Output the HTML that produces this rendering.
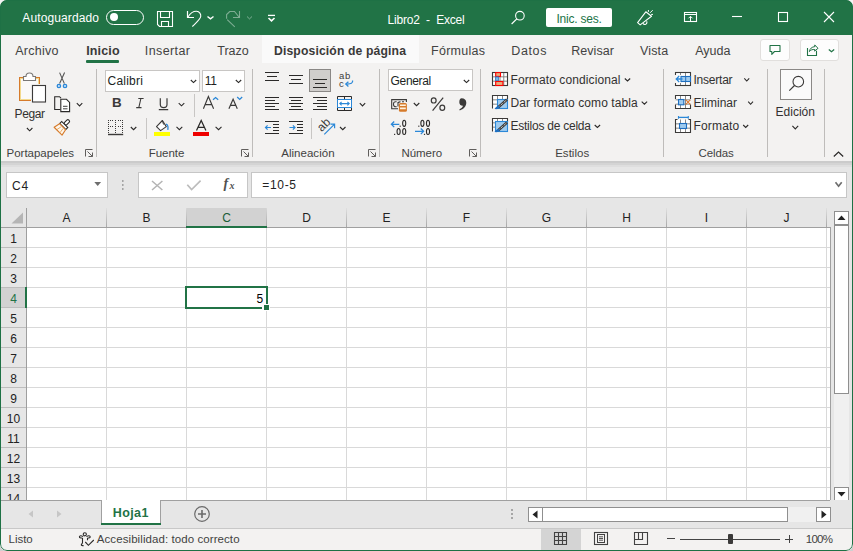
<!DOCTYPE html>
<html><head><meta charset="utf-8"><style>
html,body{margin:0;padding:0;}
body{width:853px;height:551px;overflow:hidden;position:relative;background:linear-gradient(#f4f4f4,#f4f4f4 50%,#cfcfcf);font-family:'Liberation Sans',sans-serif;}
#win{position:absolute;left:0;top:0;width:853px;height:551px;border-radius:7px;overflow:hidden;background:#f3f2f1;}
svg{overflow:visible}
</style></head><body><div id="win">
<div style="position:absolute;left:0px;top:0px;width:853px;height:35px;background:#217346"></div><div style="position:absolute;left:22.30px;top:9.64px;font-family:'Liberation Sans', sans-serif;font-size:12px;line-height:16px;font-weight:400;color:#ffffff;letter-spacing:0.118px;white-space:pre;">Autoguardado</div><div style="position:absolute;left:387.50px;top:11.64px;font-family:'Liberation Sans', sans-serif;font-size:12px;line-height:16px;font-weight:400;color:#ffffff;letter-spacing:-0.187px;white-space:pre;">Libro2  -  Excel</div><div style="position:absolute;left:106px;top:9.5px;width:38px;height:15px;box-sizing:border-box;border:1.2px solid #fff;border-radius:8px"></div><div style="position:absolute;left:109.7px;top:12.9px;width:8px;height:8px;background:#fff;border-radius:50%"></div><div style="position:absolute;left:546px;top:8px;width:66px;height:18.5px;background:#fff;border-radius:2px"></div><div style="position:absolute;left:556.40px;top:10.54px;font-family:'Liberation Sans', sans-serif;font-size:12px;line-height:16px;font-weight:400;color:#217346;letter-spacing:-0.222px;white-space:pre;">Inic. ses.</div><div style="position:absolute;left:262px;top:35px;width:156.5px;height:27.6px;background:#fafafa"></div><div style="position:absolute;left:15.20px;top:42.87px;font-family:'Liberation Sans', sans-serif;font-size:12.5px;line-height:16px;font-weight:400;color:#424242;letter-spacing:0.250px;white-space:pre;">Archivo</div><div style="position:absolute;left:86.20px;top:42.87px;font-family:'Liberation Sans', sans-serif;font-size:12.5px;line-height:16px;font-weight:700;color:#3a3938;letter-spacing:0.140px;white-space:pre;">Inicio</div><div style="position:absolute;left:144.80px;top:42.87px;font-family:'Liberation Sans', sans-serif;font-size:12.5px;line-height:16px;font-weight:400;color:#424242;letter-spacing:0.386px;white-space:pre;">Insertar</div><div style="position:absolute;left:217.30px;top:42.87px;font-family:'Liberation Sans', sans-serif;font-size:12.5px;line-height:16px;font-weight:400;color:#424242;letter-spacing:-0.025px;white-space:pre;">Trazo</div><div style="position:absolute;left:274.00px;top:42.97px;font-family:'Liberation Sans', sans-serif;font-size:12.2px;line-height:16px;font-weight:700;color:#3a3938;letter-spacing:0.130px;white-space:pre;">Disposición de página</div><div style="position:absolute;left:431.10px;top:42.87px;font-family:'Liberation Sans', sans-serif;font-size:12.5px;line-height:16px;font-weight:400;color:#424242;letter-spacing:0.243px;white-space:pre;">Fórmulas</div><div style="position:absolute;left:511.30px;top:42.87px;font-family:'Liberation Sans', sans-serif;font-size:12.5px;line-height:16px;font-weight:400;color:#424242;letter-spacing:0.625px;white-space:pre;">Datos</div><div style="position:absolute;left:571.20px;top:42.87px;font-family:'Liberation Sans', sans-serif;font-size:12.5px;line-height:16px;font-weight:400;color:#424242;letter-spacing:0.067px;white-space:pre;">Revisar</div><div style="position:absolute;left:640.00px;top:42.87px;font-family:'Liberation Sans', sans-serif;font-size:12.5px;line-height:16px;font-weight:400;color:#424242;letter-spacing:0.150px;white-space:pre;">Vista</div><div style="position:absolute;left:695.20px;top:42.87px;font-family:'Liberation Sans', sans-serif;font-size:12.5px;line-height:16px;font-weight:400;color:#424242;letter-spacing:0.025px;white-space:pre;">Ayuda</div><div style="position:absolute;left:86px;top:59.6px;width:33px;height:3px;background:#217346;border-radius:1px"></div><div style="position:absolute;left:760px;top:38.7px;width:30.4px;height:22.1px;box-sizing:border-box;background:#fdfdfd;border:1px solid #e1dfdd;border-radius:3px"></div><div style="position:absolute;left:799.6px;top:38.7px;width:39.5px;height:22.1px;box-sizing:border-box;background:#fdfdfd;border:1px solid #e1dfdd;border-radius:3px"></div><div style="position:absolute;left:96px;top:69px;width:1px;height:88px;background:#bebcba"></div><div style="position:absolute;left:252px;top:69px;width:1px;height:88px;background:#bebcba"></div><div style="position:absolute;left:379px;top:69px;width:1px;height:88px;background:#bebcba"></div><div style="position:absolute;left:480px;top:69px;width:1px;height:88px;background:#bebcba"></div><div style="position:absolute;left:663px;top:69px;width:1px;height:88px;background:#bebcba"></div><div style="position:absolute;left:767px;top:69px;width:1px;height:88px;background:#bebcba"></div><div style="position:absolute;left:824px;top:69px;width:1px;height:88px;background:#bebcba"></div><div style="position:absolute;left:14.60px;top:105.54px;font-family:'Liberation Sans', sans-serif;font-size:12px;line-height:16px;font-weight:400;color:#323130;letter-spacing:-0.425px;white-space:pre;">Pegar</div><div style="position:absolute;left:6.60px;top:144.72px;font-family:'Liberation Sans', sans-serif;font-size:11.5px;line-height:16px;font-weight:400;color:#424242;letter-spacing:-0.027px;white-space:pre;">Portapapeles</div><div style="position:absolute;left:148.80px;top:144.82px;font-family:'Liberation Sans', sans-serif;font-size:11.5px;line-height:16px;font-weight:400;color:#424242;letter-spacing:-0.060px;white-space:pre;">Fuente</div><div style="position:absolute;left:281.20px;top:145.02px;font-family:'Liberation Sans', sans-serif;font-size:11.5px;line-height:16px;font-weight:400;color:#424242;letter-spacing:0.033px;white-space:pre;">Alineación</div><div style="position:absolute;left:401.40px;top:144.82px;font-family:'Liberation Sans', sans-serif;font-size:11.5px;line-height:16px;font-weight:400;color:#424242;letter-spacing:-0.040px;white-space:pre;">Número</div><div style="position:absolute;left:555.20px;top:144.82px;font-family:'Liberation Sans', sans-serif;font-size:11.5px;line-height:16px;font-weight:400;color:#424242;letter-spacing:0.017px;white-space:pre;">Estilos</div><div style="position:absolute;left:698.60px;top:144.82px;font-family:'Liberation Sans', sans-serif;font-size:11.5px;line-height:16px;font-weight:400;color:#424242;letter-spacing:-0.140px;white-space:pre;">Celdas</div><div style="position:absolute;left:510.50px;top:71.64px;font-family:'Liberation Sans', sans-serif;font-size:12px;line-height:16px;font-weight:400;color:#323130;letter-spacing:0.106px;white-space:pre;">Formato condicional</div><div style="position:absolute;left:510.50px;top:94.84px;font-family:'Liberation Sans', sans-serif;font-size:12px;line-height:16px;font-weight:400;color:#323130;letter-spacing:0.086px;white-space:pre;">Dar formato como tabla</div><div style="position:absolute;left:510.50px;top:118.24px;font-family:'Liberation Sans', sans-serif;font-size:12px;line-height:16px;font-weight:400;color:#323130;letter-spacing:-0.240px;white-space:pre;">Estilos de celda</div><div style="position:absolute;left:693.50px;top:71.64px;font-family:'Liberation Sans', sans-serif;font-size:12px;line-height:16px;font-weight:400;color:#323130;letter-spacing:-0.229px;white-space:pre;">Insertar</div><div style="position:absolute;left:693.50px;top:94.84px;font-family:'Liberation Sans', sans-serif;font-size:12px;line-height:16px;font-weight:400;color:#323130;letter-spacing:0.029px;white-space:pre;">Eliminar</div><div style="position:absolute;left:693.50px;top:118.24px;font-family:'Liberation Sans', sans-serif;font-size:12px;line-height:16px;font-weight:400;color:#323130;letter-spacing:0.167px;white-space:pre;">Formato</div><div style="position:absolute;left:775.60px;top:103.54px;font-family:'Liberation Sans', sans-serif;font-size:12px;line-height:16px;font-weight:400;color:#323130;letter-spacing:0.000px;white-space:pre;">Edición</div><div style="position:absolute;left:105px;top:69.5px;width:94.5px;height:22px;box-sizing:border-box;background:#fff;border:1px solid #c8c6c4"></div><div style="position:absolute;left:202px;top:69.5px;width:42.7px;height:22px;box-sizing:border-box;background:#fff;border:1px solid #c8c6c4"></div><div style="position:absolute;left:388.4px;top:69.3px;width:84.4px;height:22.2px;box-sizing:border-box;background:#fff;border:1px solid #c8c6c4"></div><div style="position:absolute;left:107.50px;top:72.74px;font-family:'Liberation Sans', sans-serif;font-size:12px;line-height:16px;font-weight:400;color:#201f1e;letter-spacing:0.233px;white-space:pre;">Calibri</div><div style="position:absolute;left:204.70px;top:72.74px;font-family:'Liberation Sans', sans-serif;font-size:12px;line-height:16px;font-weight:400;color:#201f1e;letter-spacing:-0.100px;white-space:pre;">11</div><div style="position:absolute;left:390.60px;top:72.64px;font-family:'Liberation Sans', sans-serif;font-size:12px;line-height:16px;font-weight:400;color:#201f1e;letter-spacing:-0.333px;white-space:pre;">General</div><div style="position:absolute;left:309.4px;top:69.4px;width:21.3px;height:22.5px;box-sizing:border-box;background:#d0cecc;border:1px solid #8a8886"></div><div style="position:absolute;left:780px;top:69.1px;width:32px;height:30.7px;box-sizing:border-box;background:#fafafa;border:1px solid #8a8886"></div><div style="position:absolute;left:0px;top:161px;width:853px;height:47px;background:#e6e6e6"></div><div style="position:absolute;left:0px;top:161px;width:853px;height:2px;background:#cbcbcb"></div><div style="position:absolute;left:0px;top:163px;width:853px;height:2px;background:#d4d4d4"></div><div style="position:absolute;left:0px;top:165px;width:853px;height:2px;background:#dedede"></div><div style="position:absolute;left:6px;top:172px;width:102px;height:26px;box-sizing:border-box;background:#fff;border:1px solid #c6c6c6"></div><div style="position:absolute;left:138px;top:172px;width:110px;height:26px;box-sizing:border-box;background:#fff;border:1px solid #c6c6c6"></div><div style="position:absolute;left:251px;top:172px;width:596px;height:26px;box-sizing:border-box;background:#fff;border:1px solid #c6c6c6"></div><div style="position:absolute;left:12.10px;top:177.64px;font-family:'Liberation Sans', sans-serif;font-size:12px;line-height:16px;font-weight:400;color:#222222;letter-spacing:0.800px;white-space:pre;">C4</div><div style="position:absolute;left:262.20px;top:177.44px;font-family:'Liberation Sans', sans-serif;font-size:12px;line-height:16px;font-weight:400;color:#222222;letter-spacing:0.700px;white-space:pre;">=10-5</div><div style="position:absolute;left:0px;top:208px;width:853px;height:293px;background:#e6e6e6"></div><div style="position:absolute;left:27px;top:228px;width:803px;height:272px;background:#fff"></div><div style="position:absolute;left:106px;top:228px;width:1px;height:272px;background:#d9d9d9"></div><div style="position:absolute;left:186px;top:228px;width:1px;height:272px;background:#d9d9d9"></div><div style="position:absolute;left:266px;top:228px;width:1px;height:272px;background:#d9d9d9"></div><div style="position:absolute;left:346px;top:228px;width:1px;height:272px;background:#d9d9d9"></div><div style="position:absolute;left:426px;top:228px;width:1px;height:272px;background:#d9d9d9"></div><div style="position:absolute;left:506px;top:228px;width:1px;height:272px;background:#d9d9d9"></div><div style="position:absolute;left:586px;top:228px;width:1px;height:272px;background:#d9d9d9"></div><div style="position:absolute;left:666px;top:228px;width:1px;height:272px;background:#d9d9d9"></div><div style="position:absolute;left:746px;top:228px;width:1px;height:272px;background:#d9d9d9"></div><div style="position:absolute;left:826px;top:228px;width:1px;height:272px;background:#d9d9d9"></div><div style="position:absolute;left:27px;top:247px;width:803px;height:1px;background:#d9d9d9"></div><div style="position:absolute;left:27px;top:267px;width:803px;height:1px;background:#d9d9d9"></div><div style="position:absolute;left:27px;top:287px;width:803px;height:1px;background:#d9d9d9"></div><div style="position:absolute;left:27px;top:307px;width:803px;height:1px;background:#d9d9d9"></div><div style="position:absolute;left:27px;top:327px;width:803px;height:1px;background:#d9d9d9"></div><div style="position:absolute;left:27px;top:347px;width:803px;height:1px;background:#d9d9d9"></div><div style="position:absolute;left:27px;top:367px;width:803px;height:1px;background:#d9d9d9"></div><div style="position:absolute;left:27px;top:387px;width:803px;height:1px;background:#d9d9d9"></div><div style="position:absolute;left:27px;top:407px;width:803px;height:1px;background:#d9d9d9"></div><div style="position:absolute;left:27px;top:427px;width:803px;height:1px;background:#d9d9d9"></div><div style="position:absolute;left:27px;top:447px;width:803px;height:1px;background:#d9d9d9"></div><div style="position:absolute;left:27px;top:467px;width:803px;height:1px;background:#d9d9d9"></div><div style="position:absolute;left:27px;top:487px;width:803px;height:1px;background:#d9d9d9"></div><div style="position:absolute;left:27px;top:507px;width:803px;height:1px;background:#d9d9d9"></div><div style="position:absolute;left:26px;top:208px;width:1px;height:293px;background:#9e9e9e"></div><div style="position:absolute;left:106px;top:208px;width:1px;height:19px;background:linear-gradient(#e0e0e0,#a8a8a8)"></div><div style="position:absolute;left:186px;top:208px;width:1px;height:19px;background:linear-gradient(#e0e0e0,#a8a8a8)"></div><div style="position:absolute;left:266px;top:208px;width:1px;height:19px;background:linear-gradient(#e0e0e0,#a8a8a8)"></div><div style="position:absolute;left:346px;top:208px;width:1px;height:19px;background:linear-gradient(#e0e0e0,#a8a8a8)"></div><div style="position:absolute;left:426px;top:208px;width:1px;height:19px;background:linear-gradient(#e0e0e0,#a8a8a8)"></div><div style="position:absolute;left:506px;top:208px;width:1px;height:19px;background:linear-gradient(#e0e0e0,#a8a8a8)"></div><div style="position:absolute;left:586px;top:208px;width:1px;height:19px;background:linear-gradient(#e0e0e0,#a8a8a8)"></div><div style="position:absolute;left:666px;top:208px;width:1px;height:19px;background:linear-gradient(#e0e0e0,#a8a8a8)"></div><div style="position:absolute;left:746px;top:208px;width:1px;height:19px;background:linear-gradient(#e0e0e0,#a8a8a8)"></div><div style="position:absolute;left:826px;top:208px;width:1px;height:19px;background:linear-gradient(#e0e0e0,#a8a8a8)"></div><div style="position:absolute;left:1px;top:227px;width:829px;height:1px;background:#a0a0a0"></div><div style="position:absolute;left:1px;top:247px;width:25px;height:1px;background:#bdbdbd"></div><div style="position:absolute;left:1px;top:267px;width:25px;height:1px;background:#bdbdbd"></div><div style="position:absolute;left:1px;top:287px;width:25px;height:1px;background:#bdbdbd"></div><div style="position:absolute;left:1px;top:307px;width:25px;height:1px;background:#bdbdbd"></div><div style="position:absolute;left:1px;top:327px;width:25px;height:1px;background:#bdbdbd"></div><div style="position:absolute;left:1px;top:347px;width:25px;height:1px;background:#bdbdbd"></div><div style="position:absolute;left:1px;top:367px;width:25px;height:1px;background:#bdbdbd"></div><div style="position:absolute;left:1px;top:387px;width:25px;height:1px;background:#bdbdbd"></div><div style="position:absolute;left:1px;top:407px;width:25px;height:1px;background:#bdbdbd"></div><div style="position:absolute;left:1px;top:427px;width:25px;height:1px;background:#bdbdbd"></div><div style="position:absolute;left:1px;top:447px;width:25px;height:1px;background:#bdbdbd"></div><div style="position:absolute;left:1px;top:467px;width:25px;height:1px;background:#bdbdbd"></div><div style="position:absolute;left:1px;top:487px;width:25px;height:1px;background:#bdbdbd"></div><div style="position:absolute;left:1px;top:507px;width:25px;height:1px;background:#bdbdbd"></div><svg style="position:absolute;left:11px;top:212px;" width="13" height="12" viewBox="0 0 13 12"><path d="M12 0.5 L12 11.5 L0.5 11.5 Z" fill="#b5b5b5"/></svg><div style="position:absolute;left:186px;top:208px;width:81px;height:18px;background:#d2d2d2"></div><div style="position:absolute;left:186px;top:208px;width:1px;height:19px;background:linear-gradient(#d8d8d8,#a8a8a8)"></div><div style="position:absolute;left:266px;top:208px;width:1px;height:19px;background:linear-gradient(#d8d8d8,#a8a8a8)"></div><div style="position:absolute;left:186px;top:226px;width:81px;height:2px;background:#217346"></div><div style="position:absolute;left:1px;top:288px;width:24px;height:19px;background:#d2d2d2"></div><div style="position:absolute;left:25px;top:287px;width:2px;height:21px;background:#217346"></div><div style="position:absolute;left:27px;top:209.84px;width:79px;text-align:center;font-size:12px;line-height:16px;color:#222">A</div><div style="position:absolute;left:107px;top:209.84px;width:79px;text-align:center;font-size:12px;line-height:16px;color:#222">B</div><div style="position:absolute;left:187px;top:209.84px;width:79px;text-align:center;font-size:12px;line-height:16px;color:#185c37">C</div><div style="position:absolute;left:267px;top:209.84px;width:79px;text-align:center;font-size:12px;line-height:16px;color:#222">D</div><div style="position:absolute;left:347px;top:209.84px;width:79px;text-align:center;font-size:12px;line-height:16px;color:#222">E</div><div style="position:absolute;left:427px;top:209.84px;width:79px;text-align:center;font-size:12px;line-height:16px;color:#222">F</div><div style="position:absolute;left:507px;top:209.84px;width:79px;text-align:center;font-size:12px;line-height:16px;color:#222">G</div><div style="position:absolute;left:587px;top:209.84px;width:79px;text-align:center;font-size:12px;line-height:16px;color:#222">H</div><div style="position:absolute;left:667px;top:209.84px;width:79px;text-align:center;font-size:12px;line-height:16px;color:#222">I</div><div style="position:absolute;left:747px;top:209.84px;width:79px;text-align:center;font-size:12px;line-height:16px;color:#222">J</div><div style="position:absolute;left:1px;top:230.84px;width:25px;text-align:center;font-size:12px;line-height:16px;color:#222">1</div><div style="position:absolute;left:1px;top:250.84px;width:25px;text-align:center;font-size:12px;line-height:16px;color:#222">2</div><div style="position:absolute;left:1px;top:270.84px;width:25px;text-align:center;font-size:12px;line-height:16px;color:#222">3</div><div style="position:absolute;left:1px;top:290.84px;width:25px;text-align:center;font-size:12px;line-height:16px;color:#217346">4</div><div style="position:absolute;left:1px;top:310.84px;width:25px;text-align:center;font-size:12px;line-height:16px;color:#222">5</div><div style="position:absolute;left:1px;top:330.84px;width:25px;text-align:center;font-size:12px;line-height:16px;color:#222">6</div><div style="position:absolute;left:1px;top:350.84px;width:25px;text-align:center;font-size:12px;line-height:16px;color:#222">7</div><div style="position:absolute;left:1px;top:370.84px;width:25px;text-align:center;font-size:12px;line-height:16px;color:#222">8</div><div style="position:absolute;left:1px;top:390.84px;width:25px;text-align:center;font-size:12px;line-height:16px;color:#222">9</div><div style="position:absolute;left:1px;top:410.84px;width:25px;text-align:center;font-size:12px;line-height:16px;color:#222">10</div><div style="position:absolute;left:1px;top:430.84px;width:25px;text-align:center;font-size:12px;line-height:16px;color:#222">11</div><div style="position:absolute;left:1px;top:450.84px;width:25px;text-align:center;font-size:12px;line-height:16px;color:#222">12</div><div style="position:absolute;left:1px;top:470.84px;width:25px;text-align:center;font-size:12px;line-height:16px;color:#222">13</div><div style="position:absolute;left:1px;top:490.84px;width:25px;text-align:center;font-size:12px;line-height:16px;color:#222">14</div><div style="position:absolute;left:830px;top:227px;width:1px;height:274px;background:#a0a0a0"></div><div style="position:absolute;left:185px;top:286px;width:83px;height:23px;box-sizing:border-box;border:2px solid #217346"></div><div style="position:absolute;left:262px;top:304px;width:8px;height:7px;background:#fff"></div><div style="position:absolute;left:264px;top:305px;width:5px;height:5px;background:#217346"></div><div style="position:absolute;left:256.50px;top:290.74px;font-family:'Liberation Sans', sans-serif;font-size:12px;line-height:16px;font-weight:400;color:#000000;letter-spacing:0.000px;white-space:pre;">5</div><div style="position:absolute;left:831px;top:208px;width:21px;height:293px;background:#e6e6e6"></div><div style="position:absolute;left:834px;top:225px;width:15px;height:275px;background:#f0f0f0"></div><div style="position:absolute;left:834px;top:210.5px;width:15px;height:14px;box-sizing:border-box;background:#fff;border:1px solid #8f8f8f"></div><svg style="position:absolute;left:834px;top:210.5px;" width="15" height="14" viewBox="0 0 15 14"><path d="M3.5 9 L11.5 9 L7.5 4.5 Z" fill="#222"/></svg><div style="position:absolute;left:834px;top:225px;width:15px;height:169px;box-sizing:border-box;background:#fff;border:1px solid #8f8f8f"></div><div style="position:absolute;left:834px;top:486.5px;width:15px;height:14px;box-sizing:border-box;background:#fff;border:1px solid #8f8f8f"></div><svg style="position:absolute;left:834px;top:486.5px;" width="15" height="14" viewBox="0 0 15 14"><path d="M3.5 5 L11.5 5 L7.5 9.5 Z" fill="#222"/></svg><div style="position:absolute;left:1px;top:500px;width:851px;height:28px;background:#e6e6e6"></div><div style="position:absolute;left:1px;top:500px;width:829px;height:1px;background:#a0a0a0"></div><div style="position:absolute;left:101px;top:500px;width:60px;height:25px;box-sizing:border-box;background:#fff;border-left:1px solid #a0a0a0;border-right:1px solid #a0a0a0"></div><div style="position:absolute;left:101px;top:523px;width:60px;height:2px;background:#217346"></div><div style="position:absolute;left:112.80px;top:505.17px;font-family:'Liberation Sans', sans-serif;font-size:12.5px;line-height:16px;font-weight:700;color:#217346;letter-spacing:0.375px;white-space:pre;">Hoja1</div><svg style="position:absolute;left:27px;top:510px;" width="7" height="8" viewBox="0 0 7 8"><path d="M6 0.5 L6 7.5 L1.5 4 Z" fill="#c6c6c6"/></svg><svg style="position:absolute;left:56px;top:510px;" width="7" height="8" viewBox="0 0 7 8"><path d="M1 0.5 L1 7.5 L5.5 4 Z" fill="#c6c6c6"/></svg><svg style="position:absolute;left:193px;top:505px;" width="18" height="18" viewBox="0 0 18 18"><circle cx="9" cy="9" r="7.3" fill="none" stroke="#6a6a6a" stroke-width="1.2"/><path d="M9 5 V13 M5 9 H13" stroke="#6a6a6a" stroke-width="1.6"/></svg><div style="position:absolute;left:511px;top:509px;width:2px;height:2px;background:#a6a6a6"></div><div style="position:absolute;left:511px;top:513px;width:2px;height:2px;background:#a6a6a6"></div><div style="position:absolute;left:511px;top:517px;width:2px;height:2px;background:#a6a6a6"></div><div style="position:absolute;left:528px;top:507px;width:303px;height:15px;background:#f0f0f0"></div><div style="position:absolute;left:528px;top:507px;width:15px;height:15px;box-sizing:border-box;background:#fff;border:1px solid #8f8f8f"></div><svg style="position:absolute;left:528px;top:507px;" width="15" height="15" viewBox="0 0 15 15"><path d="M9.5 3.5 L9.5 11.5 L4.5 7.5 Z" fill="#222"/></svg><div style="position:absolute;left:542px;top:507px;width:246px;height:15px;box-sizing:border-box;background:#fff;border:1px solid #8f8f8f"></div><div style="position:absolute;left:816px;top:507px;width:15px;height:15px;box-sizing:border-box;background:#fff;border:1px solid #8f8f8f"></div><svg style="position:absolute;left:816px;top:507px;" width="15" height="15" viewBox="0 0 15 15"><path d="M5.5 3.5 L5.5 11.5 L10.5 7.5 Z" fill="#222"/></svg><div style="position:absolute;left:1px;top:528px;width:851px;height:1px;background:#c8c8c8"></div><div style="position:absolute;left:1px;top:529px;width:851px;height:21px;background:#f3f2f1"></div><div style="position:absolute;left:541px;top:529px;width:40px;height:21px;background:#d4d4d4"></div><div style="position:absolute;left:8.60px;top:530.62px;font-family:'Liberation Sans', sans-serif;font-size:11.5px;line-height:16px;font-weight:400;color:#424242;letter-spacing:-0.050px;white-space:pre;">Listo</div><div style="position:absolute;left:96.80px;top:531.42px;font-family:'Liberation Sans', sans-serif;font-size:11.5px;line-height:16px;font-weight:400;color:#424242;letter-spacing:0.078px;white-space:pre;">Accesibilidad: todo correcto</div><div style="position:absolute;left:805.80px;top:531.12px;font-family:'Liberation Sans', sans-serif;font-size:11.5px;line-height:16px;font-weight:400;color:#424242;letter-spacing:-0.733px;white-space:pre;">100%</div><div style="position:absolute;left:667px;top:538px;width:8px;height:1px;background:#444"></div><div style="position:absolute;left:680px;top:539px;width:100px;height:1.2px;background:#444"></div><div style="position:absolute;left:728px;top:534.3px;width:5px;height:10.2px;background:#3b3a39;border-radius:1px"></div><div style="position:absolute;left:785px;top:538.5px;width:8px;height:1px;background:#444"></div><div style="position:absolute;left:788.5px;top:535px;width:1px;height:8px;background:#444"></div><div style="position:absolute;left:194px;top:94px;width:1px;height:23px;background:#c8c6c4"></div><div style="position:absolute;left:146px;top:118px;width:1px;height:21px;background:#c8c6c4"></div><div style="position:absolute;left:154px;top:132px;width:16px;height:4px;background:#ffff00"></div><div style="position:absolute;left:193px;top:132px;width:16px;height:4px;background:#ee0000"></div><div style="position:absolute;left:338.9px;top:68.4px;font-size:9.5px;line-height:16px;color:#3b3a39;letter-spacing:0.9px">ab</div><div style="position:absolute;left:338.9px;top:75.6px;font-size:9.5px;line-height:16px;color:#3b3a39">c</div><div style="position:absolute;left:311px;top:118px;width:1px;height:21px;background:#c8c6c4"></div><div style="position:absolute;left:223.5px;top:175.6px;font-family:'Liberation Serif',serif;font-style:italic;font-weight:700;font-size:14px;line-height:16px;color:#505050">f</div><div style="position:absolute;left:229.5px;top:178.2px;font-family:'Liberation Serif',serif;font-style:italic;font-weight:700;font-size:10px;line-height:16px;color:#505050">x</div><svg style="position:absolute;left:0;top:0" width="853" height="551" viewBox="0 0 853 551" fill="none"><path d="M157.5 11.5 H172.5 V26.5 H159.5 L157.5 24.5 Z M160.5 11.5 V17.5 H169.5 V11.5 M161.5 26.5 V21.5 H168.5 V26.5" stroke="#ffffff" stroke-width="1.1"/><path d="M187.5 11 V17.5 H194" stroke="#ffffff" stroke-width="1.2"/><path d="M188 17 C190.5 13, 193.5 11.2, 196.5 11.3 C199.5 11.5, 201.2 14, 200.7 16.7 C200.2 19.5, 196 22.8, 192.3 26.5" stroke="#ffffff" stroke-width="1.1"/><path d="M207.5 16.5 L210.5 18.9 L213.5 16.5" stroke="#ffffff" stroke-width="1.4" fill="none"/><g stroke="#ffffff" stroke-opacity="0.42" stroke-width="1.1"><path d="M239.5 11 V17.5 H233"/><path d="M239 17 L234.5 11.5 H229.7 L226.6 14.6 V18.8 M227.2 19.6 L234.8 26.8"/></g><path d="M247 16.5 L249.5 18.9 L252 16.5" stroke="rgba(255,255,255,0.42)" stroke-width="1" fill="none"/><path d="M268 15.4 H275" stroke="#ffffff" stroke-width="1.3"/><path d="M268.5 18 L271.5 20.8 L274.5 18" stroke="#ffffff" stroke-width="1.6" fill="none"/><circle cx="519.9" cy="15.7" r="4.3" stroke="#ffffff" stroke-width="1.1"/><path d="M516.8 18.8 L511.6 24" stroke="#ffffff" stroke-width="1.2"/><path d="M637.6 22.6 L645.8 11.8 L651.5 16.3 L640.2 24.9 Z" stroke="#ffffff" stroke-width="1.1" stroke-linejoin="round"/><path d="M643 23.4 A2 2 0 0 0 646.6 21.2" stroke="#ffffff" stroke-width="1.1"/><path d="M648.4 10 V11.9 M650.1 12.8 L652.7 10.2 M651.1 14.4 H653" stroke="#ffffff" stroke-width="1"/><rect x="684.5" y="12.5" width="12" height="9" stroke="#ffffff" stroke-width="1.1"/><path d="M684.5 14.5 H696.5 M690.5 16.5 V21.5 M688.5 18.3 L690.5 16.3 L692.5 18.3" stroke="#ffffff" stroke-width="1"/><path d="M732 16.5 H742" stroke="#ffffff" stroke-width="1.1"/><rect x="778.5" y="12.5" width="9" height="9" stroke="#ffffff" stroke-width="1.1"/><path d="M824 12 L834 22 M834 12 L824 22" stroke="#ffffff" stroke-width="1.1"/><path d="M770 45.5 H780 V51.5 H774.5 L771.8 54.3 V51.5 H770 Z" stroke="#217346" stroke-width="1.1" stroke-linejoin="round"/><path d="M816.5 50.8 V55.5 H807.5 V48" stroke="#217346" stroke-width="1.1"/><path d="M809.4 51.6 C809.8 48.6, 811.8 46.9, 814.9 46.6 L814.7 44.9 L818 48.3 L814.6 51.1 L814.8 49.5 C812.5 49.2, 810.6 50, 809.4 51.6 Z" stroke="#217346" stroke-width="1" stroke-linejoin="round"/><path d="M828.8 49.5 L831.5 51.8 L834.2 49.5" stroke="#217346" stroke-width="1.2" fill="none"/><rect x="19" y="77" width="21" height="24" fill="#d67b2b"/><rect x="20" y="78" width="19" height="22" fill="#f3d98c"/><rect x="21" y="79" width="17" height="20" fill="#faf9f8"/><path d="M23.5 80.5 V76.5 H26 C26 74, 27.5 73, 29.5 73 C31.5 73, 33 74, 33 76.5 H35.5 V80.5 Z" stroke="#7a7876" stroke-width="1.1" fill="#ffffff"/><rect x="31" y="84" width="16" height="19" fill="#f3f2f1"/><rect x="32.5" y="85.5" width="13" height="16.5" stroke="#3b3a39" stroke-width="1.1" fill="#ffffff"/><path d="M26.9 128 L29.65 130.8 L32.4 128" stroke="#2b2a29" stroke-width="1.1" fill="none"/><path d="M59.6 72.6 L64.4 83.6 M64.6 72.6 L59.6 83.6" stroke="#555" stroke-width="1.1"/><circle cx="58.9" cy="86" r="1.7" stroke="#2b88d8" stroke-width="1.3" fill="#cfe4f7"/><circle cx="65" cy="86" r="1.7" stroke="#2b88d8" stroke-width="1.3" fill="#cfe4f7"/><path d="M60.5 109.5 H54.7 V96.7 H59.5 L61 98.2" stroke="#2b2a29" stroke-width="1.1"/><path d="M60.8 99.3 H66.5 L69.6 102.4 V111.6 H60.8 Z" stroke="#2b2a29" stroke-width="1.1" fill="#fff"/><path d="M63 106.3 H67.5 M63 108.8 H67.5" stroke="#2b2a29" stroke-width="0.9"/><path d="M76.8 103.2 L79.55 105.9 L82.3 103.2" stroke="#2b2a29" stroke-width="1.1" fill="none"/><g transform="translate(62.9 126.4) rotate(45)"><rect x="-1.6" y="-8.6" width="3.2" height="6" rx="1.4" stroke="#2b2a29" stroke-width="1.1" fill="#fff"/><rect x="-4.3" y="-2.6" width="8.6" height="2.8" stroke="#2b2a29" stroke-width="1.1" fill="#fff"/><path d="M-4.3 0.5 L-5.6 6.8 L5.6 6.8 L4.3 0.5 Z" stroke="#d67b2b" stroke-width="1.1" fill="#fdf6ec" stroke-linejoin="round"/><path d="M-1 1.5 L-2 6.5 M1.6 1.5 L2.4 6.5" stroke="#e8a050" stroke-width="0.8"/></g><path d="M190.8 80 L193.5 82.6 L196.2 80" stroke="#2b2a29" stroke-width="1.1" fill="none"/><path d="M235.8 80 L238.5 82.6 L241.2 80" stroke="#2b2a29" stroke-width="1.1" fill="none"/><path d="M178.7 103.2 L181.5 105.8 L184.3 103.2" stroke="#2b2a29" stroke-width="1.1" fill="none"/><path d="M138.3 98.5 H143.6 M136.2 107.6 H141.5 M140.9 98.5 L138.8 107.6" stroke="#3b3a39" stroke-width="1.1"/><path d="M160.3 98.2 V104.5 C160.3 106.6, 161.7 107.6, 163.7 107.6 C165.7 107.6, 167 106.6, 167 104.5 V98.2" stroke="#3b3a39" stroke-width="1.2"/><path d="M158.8 109.6 H168.2" stroke="#3b3a39" stroke-width="1.1"/><path d="M203.4 108.8 L208.4 96.6 L213.6 108.8 M205.2 104.6 H211.7" stroke="#3b3a39" stroke-width="1.15"/><path d="M213 99.7 L215.6 97.6 L218.2 99.7" stroke="#2b88d8" stroke-width="1.3"/><path d="M228.9 108.8 L233.1 99.2 L237.3 108.8 M230.4 105.4 H235.8" stroke="#3b3a39" stroke-width="1.15"/><path d="M237.2 97 L239.7 99.4 L242.2 97" stroke="#2b88d8" stroke-width="1.3"/><g fill="#3b3a39"><rect x="108" y="120" width="1" height="1"/><rect x="108" y="126" width="1" height="1"/><rect x="110" y="120" width="1" height="1"/><rect x="110" y="126" width="1" height="1"/><rect x="112" y="120" width="1" height="1"/><rect x="112" y="126" width="1" height="1"/><rect x="115" y="120" width="1" height="1"/><rect x="115" y="126" width="1" height="1"/><rect x="118" y="120" width="1" height="1"/><rect x="118" y="126" width="1" height="1"/><rect x="120" y="120" width="1" height="1"/><rect x="120" y="126" width="1" height="1"/><rect x="122" y="120" width="1" height="1"/><rect x="122" y="126" width="1" height="1"/><rect x="108" y="122" width="1" height="1"/><rect x="115" y="122" width="1" height="1"/><rect x="122" y="122" width="1" height="1"/><rect x="108" y="124" width="1" height="1"/><rect x="115" y="124" width="1" height="1"/><rect x="122" y="124" width="1" height="1"/><rect x="108" y="128" width="1" height="1"/><rect x="115" y="128" width="1" height="1"/><rect x="122" y="128" width="1" height="1"/><rect x="108" y="130" width="1" height="1"/><rect x="115" y="130" width="1" height="1"/><rect x="122" y="130" width="1" height="1"/><rect x="108" y="132" width="1" height="1"/><rect x="115" y="132" width="1" height="1"/><rect x="122" y="132" width="1" height="1"/></g><rect x="108" y="133.8" width="15.2" height="1.4" fill="#3b3a39"/><path d="M130.8 127 L133.55 129.7 L136.3 127" stroke="#2b2a29" stroke-width="1.1" fill="none"/><path d="M156.5 126.6 L162.4 120.5 L166.3 126.6 L160.6 130.6 Z" stroke="#3b3a39" stroke-width="1.1" fill="#fff" stroke-linejoin="round"/><path d="M162.4 120.5 L163.5 124.5" stroke="#3b3a39" stroke-width="1"/><path d="M166 124.2 C168 124.5, 168.3 127, 167.8 129.8" stroke="#2b88d8" stroke-width="1.3"/><path d="M176.5 126.9 L179.4 129.7 L182.3 126.9" stroke="#2b2a29" stroke-width="1.1" fill="none"/><path d="M196.5 130.6 L201.2 120.4 L205.9 130.6 M198.1 127.3 H204.3" stroke="#2b2a29" stroke-width="1.25"/><path d="M215.6 126.9 L218.55 129.7 L221.5 126.9" stroke="#2b2a29" stroke-width="1.1" fill="none"/><path d="M265 72.5 H279 M267 76.5 H277 M265 80.5 H279 " stroke="#2b2a29" stroke-width="1.1"/><path d="M289 75.5 H303 M291 79.5 H301 M289 83.5 H303 " stroke="#2b2a29" stroke-width="1.1"/><path d="M313 79.5 H327 M315 83.5 H325 M313 87.5 H327 " stroke="#2b2a29" stroke-width="1.1"/><path d="M265 97.5 H279 M265 100.5 H275 M265 103.5 H279 M265 106.5 H275 M265 109.5 H279 " stroke="#2b2a29" stroke-width="1.1"/><path d="M289 97.5 H303 M291 100.5 H301 M289 103.5 H303 M291 106.5 H301 M289 109.5 H303 " stroke="#2b2a29" stroke-width="1.1"/><path d="M313 97.5 H327 M317 100.5 H327 M313 103.5 H327 M317 106.5 H327 M313 109.5 H327 " stroke="#2b2a29" stroke-width="1.1"/><path d="M352.5 80.5 C353.3 83, 351 84.3, 346 84" stroke="#2b88d8" stroke-width="1.3"/><path d="M348.4 81.7 L345.8 84 L348.4 86.4" stroke="#2b88d8" stroke-width="1.3"/><path d="M337.5 96.5 H351.5 V110.5 H337.5 Z M344.5 96.5 V99.5 M344.5 107.5 V110.5" stroke="#2b2a29" stroke-width="1"/><rect x="337.5" y="99.5" width="14" height="8" stroke="#2b88d8" stroke-width="1" fill="#fff"/><path d="M339.8 103.6 H349.2 M341.6 101.8 L339.8 103.6 L341.6 105.4 M347.4 101.8 L349.2 103.6 L347.4 105.4" stroke="#2b88d8" stroke-width="1.1"/><path d="M359.8 103.2 L362.5 105.9 L365.2 103.2" stroke="#2b2a29" stroke-width="1.1" fill="none"/><path d="M265 121.5 H279 M265 133.5 H279 " stroke="#2b2a29" stroke-width="1.1"/><path d="M273 124.5 H279 M273 127.5 H279 M273 130.5 H279 " stroke="#2b2a29" stroke-width="1.1"/><path d="M265.5 127.5 H271 M267.6 125.4 L265.5 127.5 L267.6 129.6" stroke="#2b88d8" stroke-width="1.2"/><path d="M289 121.5 H303 M289 133.5 H303 " stroke="#2b2a29" stroke-width="1.1"/><path d="M297 124.5 H303 M297 127.5 H303 M297 130.5 H303 " stroke="#2b2a29" stroke-width="1.1"/><path d="M289.5 127.5 H295 M292.9 125.4 L295 127.5 L292.9 129.6" stroke="#2b88d8" stroke-width="1.2"/><text x="323.7" y="124.6" transform="rotate(-45 323.7 124.6)" text-anchor="middle" dominant-baseline="central" font-family="Liberation Sans" font-size="12" fill="#3b3a39">ab</text><path d="M324.3 134.4 L334.6 124.1 M330.5 124.1 H334.6 V128.2" stroke="#2b88d8" stroke-width="1.2"/><path d="M340 127 L342.75 129.7 L345.5 127" stroke="#2b2a29" stroke-width="1.1" fill="none"/><path d="M463.8 80 L466.5 82.6 L469.2 80" stroke="#2b2a29" stroke-width="1.1" fill="none"/><path d="M398 108.7 H391.7 V99.6 H406.4 V102" stroke="#3b3a39" stroke-width="1.1"/><path d="M396.6 101.8 C394.3 101.3, 393.5 102.5, 393.5 104.2 C393.5 106, 394.4 107, 396.6 106.6 M398 102 V106.6 M398 102.8 C398.7 102, 399.5 101.8, 400.5 101.9 M402 101.8 H404" stroke="#3b3a39" stroke-width="1.1"/><rect x="398.9" y="102.9" width="8" height="8.9" rx="1.5" fill="#d67b2b"/><path d="M400 105.3 H405.8 M400 108.4 H405.8" stroke="#fff3e0" stroke-width="1.6"/><path d="M413.8 103 L416.55 105.7 L419.3 103" stroke="#2b2a29" stroke-width="1.1" fill="none"/><ellipse cx="433.7" cy="100.4" rx="2.4" ry="2.6" stroke="#3b3a39" stroke-width="1.2"/><ellipse cx="442.3" cy="107.7" rx="2.4" ry="2.6" stroke="#3b3a39" stroke-width="1.2"/><path d="M443.2 97.6 L432.6 110.6" stroke="#3b3a39" stroke-width="1.2"/><path d="M461.5 98.3 C464.5 98.3, 466.3 100, 466.3 102.8 C466.3 106.5, 463.5 109.2, 459.8 110.4 L459.3 109.4 C461.4 108.5, 462.7 107.2, 463 105.8 C461.2 106, 459.3 104.6, 459.3 102.2 C459.3 99.8, 460.3 98.3, 461.5 98.3 Z" fill="#3b3a39"/><ellipse cx="404.2" cy="123.3" rx="1.55" ry="3.05" stroke="#2b2a29" stroke-width="1.1"/><rect x="399.6" y="125.6" width="1.2" height="1.2" fill="#3b3a39"/><ellipse cx="398.6" cy="131.5" rx="1.55" ry="3.05" stroke="#2b2a29" stroke-width="1.1"/><ellipse cx="404.2" cy="131.5" rx="1.55" ry="3.05" stroke="#2b2a29" stroke-width="1.1"/><rect x="394" y="133.8" width="1.2" height="1.2" fill="#3b3a39"/><path d="M391.5 124.3 H399.3 M394.2 121.5 L391.4 124.3 L394.2 127.1" stroke="#2b88d8" stroke-width="1.3"/><ellipse cx="422.4" cy="123.3" rx="1.55" ry="3.05" stroke="#2b2a29" stroke-width="1.1"/><ellipse cx="428" cy="123.3" rx="1.55" ry="3.05" stroke="#2b2a29" stroke-width="1.1"/><rect x="418.2" y="125.6" width="1.2" height="1.2" fill="#3b3a39"/><ellipse cx="428" cy="131.5" rx="1.55" ry="3.05" stroke="#2b2a29" stroke-width="1.1"/><rect x="423.9" y="133.8" width="1.2" height="1.2" fill="#3b3a39"/><path d="M415 131.3 H423.5 M420.8 128.5 L423.6 131.3 L420.8 134.1" stroke="#2b88d8" stroke-width="1.3"/><path d="M85.5 156.5 V149.5 H92.5 M87.5 151.5 L92.5 156.5 M92.5 152.5 V156.5 H88.5" stroke="#605e5c" stroke-width="1"/><path d="M241.5 156.5 V149.5 H248.5 M243.5 151.5 L248.5 156.5 M248.5 152.5 V156.5 H244.5" stroke="#605e5c" stroke-width="1"/><path d="M368.5 156.5 V149.5 H375.5 M370.5 151.5 L375.5 156.5 M375.5 152.5 V156.5 H371.5" stroke="#605e5c" stroke-width="1"/><path d="M469.5 156.5 V149.5 H476.5 M471.5 151.5 L476.5 156.5 M476.5 152.5 V156.5 H472.5" stroke="#605e5c" stroke-width="1"/><path d="M833.8 156.5 L838.5 152 L843.2 156.5" stroke="#2b2a29" stroke-width="1.2" fill="none"/><rect x="492.5" y="72.5" width="15" height="13" fill="#fff"/><path d="M496.25 72.5 V85.5 M500.00 72.5 V85.5 M503.75 72.5 V85.5 M492.5 76.83 H507.5 M492.5 81.17 H507.5 " stroke="#7a7a7a" stroke-width="0.9"/><rect x="492.5" y="72.5" width="15" height="13" stroke="#3b3a39" stroke-width="1.1"/><rect x="495.7" y="72.6" width="4.8" height="3.8" fill="#e8ae7c" stroke="#ff0000" stroke-width="1.1"/><rect x="495.7" y="76.9" width="2.6" height="4" fill="#8cc4f0" stroke="#1f6fc0" stroke-width="0.9"/><rect x="495.7" y="81.5" width="7.2" height="4" fill="#e8ae7c" stroke="#ff0000" stroke-width="1.1"/><rect x="492.5" y="95.5" width="15" height="13" fill="#fff"/><path d="M497.50 95.5 V108.5 M502.50 95.5 V108.5 M492.5 99.83 H507.5 M492.5 104.17 H507.5 " stroke="#7a7a7a" stroke-width="0.9"/><path d="M492.5 108.5 V95.5 H507.5 V99" stroke="#3b3a39" stroke-width="1.1"/><rect x="497.5" y="99.5" width="10" height="9" fill="#9fcbef" stroke="#2b88d8" stroke-width="1.1"/><path d="M498 107.5 L507 99.5" stroke="#3b3a39" stroke-width="2.6"/><path d="M498 107.5 L507 99.5" stroke="#fff" stroke-width="1" stroke-dasharray="1 1"/><path d="M494.5 109 C496 106.5, 498 105.5, 499.8 106.3 C499.5 108.5, 497.5 109.5, 494.5 109 Z" fill="#1f6fc0"/><rect x="492.5" y="118.5" width="15" height="13" fill="#fff"/><path d="M497.50 118.5 V131.5 M502.50 118.5 V131.5 M492.5 122.83 H507.5 M492.5 127.17 H507.5 " stroke="#7a7a7a" stroke-width="0.9"/><path d="M492.5 131.5 V118.5 H507.5 V122" stroke="#3b3a39" stroke-width="1.1"/><rect x="495.5" y="121.5" width="12" height="10" fill="#9fcbef" stroke="#2b88d8" stroke-width="1.1"/><path d="M498 130.5 L507 122.5" stroke="#3b3a39" stroke-width="2.6"/><path d="M498 130.5 L507 122.5" stroke="#fff" stroke-width="1" stroke-dasharray="1 1"/><path d="M494.5 132 C496 129.5, 498 128.5, 499.8 129.3 C499.5 131.5, 497.5 132.5, 494.5 132 Z" fill="#1f6fc0"/><path d="M624.8 78.5 L627.5 81 L630.2 78.5" stroke="#2b2a29" stroke-width="1.1" fill="none"/><path d="M641.7 101.7 L644.4000000000001 104.2 L647.1 101.7" stroke="#2b2a29" stroke-width="1.1" fill="none"/><path d="M594.7 125 L597.4000000000001 127.5 L600.1 125" stroke="#2b2a29" stroke-width="1.1" fill="none"/><rect x="675.5" y="72.5" width="15" height="13" fill="#fff"/><path d="M680.50 72.5 V85.5 M685.50 72.5 V85.5 M675.5 76.83 H690.5 M675.5 81.17 H690.5 " stroke="#7a7a7a" stroke-width="0.9"/><rect x="675.5" y="72.5" width="15" height="13" stroke="#3b3a39" stroke-width="1.1"/><rect x="674" y="75" width="8" height="8" fill="#f3f2f1"/><rect x="676" y="75.5" width="5" height="7" fill="#fff"/><rect x="681" y="76.5" width="9.5" height="5" fill="#9fcbef" stroke="#1f6fc0" stroke-width="1.1"/><path d="M685.7 76.5 V81.5" stroke="#1f6fc0" stroke-width="1"/><path d="M676.2 79 H682.5 M679.2 76 L676.2 79 L679.2 82" stroke="#2b88d8" stroke-width="1.3"/><rect x="675.5" y="95.5" width="15" height="13" fill="#fff"/><path d="M680.50 95.5 V108.5 M685.50 95.5 V108.5 M675.5 99.83 H690.5 M675.5 104.17 H690.5 " stroke="#7a7a7a" stroke-width="0.9"/><path d="M675.5 99 V95.5 H690.5 V99 M675.5 104.5 V108.5 H690.5 V104.5" stroke="#3b3a39" stroke-width="1.1"/><rect x="672" y="99.5" width="3" height="5" fill="#f3f2f1"/><rect x="678.5" y="99.5" width="5.3" height="5.3" fill="#9fcbef" stroke="#1f6fc0" stroke-width="1.1"/><path d="M685.8 99.8 L690.3 104.3 M690.3 99.8 L685.8 104.3" stroke="#e07a2e" stroke-width="1.1"/><rect x="675.5" y="119.5" width="15" height="13" fill="#fff"/><path d="M680.50 119.5 V132.5 M685.50 119.5 V132.5 M675.5 123.83 H690.5 M675.5 128.17 H690.5 " stroke="#7a7a7a" stroke-width="0.9"/><path d="M677.5 119.5 H675.5 V132.5 H690.5 V119.5 H688.5" stroke="#3b3a39" stroke-width="1.1"/><rect x="679.5" y="123.5" width="7" height="5" fill="#9fcbef" stroke="#1f6fc0" stroke-width="1.1"/><path d="M678.5 117.4 H688.3 M678.5 116 V118.8 M688.3 116 V118.8" stroke="#2b88d8" stroke-width="1.1"/><path d="M744.3 78.3 L746.75 81 L749.2 78.3" stroke="#2b2a29" stroke-width="1.1" fill="none"/><path d="M748.2 101.7 L750.6 104.3 L753 101.7" stroke="#2b2a29" stroke-width="1.1" fill="none"/><path d="M743.2 125 L745.7 127.5 L748.2 125" stroke="#2b2a29" stroke-width="1.1" fill="none"/><circle cx="798.3" cy="81.7" r="5.3" stroke="#3b3a39" stroke-width="1.1"/><path d="M794.5 85.5 L789.3 90.7" stroke="#3b3a39" stroke-width="1.2"/><path d="M792.4 125.9 L795.3 128.9 L798.2 125.9" stroke="#2b2a29" stroke-width="1.1" fill="none"/><path d="M94.3 182 H101.1 L97.7 185.9 Z" fill="#6e6e6e"/><circle cx="122.8" cy="181" r="0.9" fill="#999"/><circle cx="122.8" cy="185" r="0.9" fill="#999"/><circle cx="122.8" cy="189" r="0.9" fill="#999"/><path d="M152 181 L162.4 190 M162.4 181 L152 190" stroke="#b4b4b4" stroke-width="1.5"/><path d="M187.3 184.7 L191.6 189.6 L200.6 180.7" stroke="#bcbcbc" stroke-width="1.7"/><path d="M835.5 182.2 L838.6 186.2 L841.7 182.2" stroke="#6e6e6e" stroke-width="1.7"/><path d="M554.5 532.5 H566.5 V544.5 H554.5 Z M558.5 532.5 V544.5 M562.5 532.5 V544.5 M554.5 536.5 H566.5 M554.5 540.5 H566.5" stroke="#424242" stroke-width="1.1"/><rect x="594.5" y="532.5" width="13" height="12" stroke="#424242" stroke-width="1.1"/><rect x="597.5" y="534.5" width="7" height="8" stroke="#424242" stroke-width="1"/><path d="M599 536.8 H603 M599 538.5 H603 M599 540.2 H603" stroke="#424242" stroke-width="0.9"/><path d="M634.5 532.5 H647.5 V544.5 H634.5 Z M634.5 539.5 H642.5 V532.5 M638.5 532.5 V539.5" stroke="#424242" stroke-width="1.1"/><circle cx="84.8" cy="534.3" r="1.6" stroke="#2b2a29" stroke-width="1.1"/><path d="M83.2 536.6 C81.5 535.6, 79.6 535.2, 79.4 536.8 C79.3 537.8, 80.3 538, 82.4 538 M86.4 536.6 C88.1 535.6, 90 535.2, 90.2 536.8 C90.3 537.8, 89.3 538, 87.4 538 M82.5 538 V542.5 C82.5 543.5, 81.6 544, 81.3 544.9 C81.2 545.6, 82 545.8, 83.6 545.6 M87.5 538 V540.3" stroke="#2b2a29" stroke-width="1.1" fill="none"/><path d="M85.3 542 L88.4 545.3 L93.8 540" stroke="#2b2a29" stroke-width="1.1"/></svg><div style="position:absolute;left:112px;top:94.5px;font-size:13.4px;line-height:16px;font-weight:700;color:#3b3a39">B</div>
<div style="position:absolute;left:0;top:0;width:851px;height:549px;border:1px solid #1e7145;border-radius:7px;"></div>
</div></body></html>
